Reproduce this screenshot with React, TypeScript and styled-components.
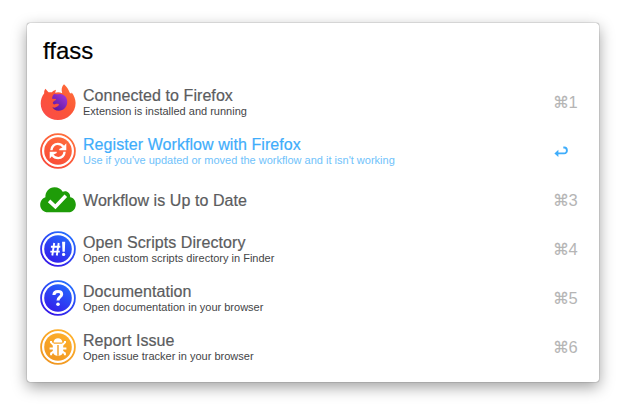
import React from "react";
import styled, { createGlobalStyle } from "styled-components";

const GlobalStyle = createGlobalStyle`
  body { margin: 0; background: #fff; overflow: hidden; }
`;

const Desktop = styled.main`
  box-sizing: border-box;
  width: 626px;
  height: 413px;
  padding: 23px 27px 31px;
  font-family: "Liberation Sans", Arial, sans-serif;
`;

const Panel = styled.section`
  box-sizing: border-box;
  width: 572px;
  height: 359px;
  background: #fff;
  border-radius: 3px;
  box-shadow: 0 0 1px rgba(0, 0, 0, 0.6), 0 0 1px rgba(0, 0, 0, 0.25), 0 5px 15px rgba(0, 0, 0, 0.38);
`;

const Query = styled.div`
  height: 55px;
  line-height: 55px;
  padding-left: 16px;
  font-size: 24px;
  color: #000;
  -webkit-text-stroke: 0.2px #000;
`;

const Results = styled.ul`
  list-style: none;
  margin: 0;
  padding: 0;
`;

const Row = styled.li`
  display: flex;
  align-items: center;
  height: 49px;
  padding-left: 13px;
`;

const Icon = styled.svg`
  display: block;
  flex: none;
  width: 36px;
  height: 36px;
  margin-bottom: 1px;
  overflow: visible;
`;

const Copy = styled.div`
  width: 471px;
  flex: none;
  margin-left: 7px;
  white-space: nowrap;
`;

const Title = styled.div<{ $active?: boolean }>`
  font-size: 16px;
  line-height: 18px;
  letter-spacing: 0.07px;
  color: ${(p) => (p.$active ? "#3fadfb" : "#5b5c5e")};
  -webkit-text-stroke: 0.2px currentColor;
`;

const Subtitle = styled.div<{ $active?: boolean }>`
  font-size: 11px;
  line-height: 13px;
  color: ${(p) => (p.$active ? "#6fc2fb" : "#444547")};
`;

const Shortcut = styled.div`
  display: flex;
  align-items: center;
  height: 20px;
  font-size: 16.5px;
  color: #b5b5b5;
`;

const CommandKey = styled.span`
  font-family: "DejaVu Sans", sans-serif;
  font-size: 16px;
  width: 15.5px;
  margin-left: -1px;
  -webkit-text-stroke: 0.15px currentColor;
`;

const ReturnIcon = styled.svg`
  display: block;
  width: 14px;
  height: 12px;
`;

const Firefox = () => (
  <Icon viewBox="0 0 36 36">
    <defs>
      <linearGradient id="fox" x1="1" y1="0" x2="0" y2="1">
        <stop offset="0" stopColor="#ff7139" />
        <stop offset="0.5" stopColor="#fb5438" />
        <stop offset="1" stopColor="#fb4a4c" />
      </linearGradient>
      <linearGradient id="globe" x1="1" y1="0" x2="0.2" y2="1">
        <stop offset="0" stopColor="#a83bdd" />
        <stop offset="1" stopColor="#5b169f" />
      </linearGradient>
    </defs>
    <path fill="url(#fox)" d="M24 .2C26.8 2.8 28.8 5.5 29.6 8.6L31.1 9.8L31.7 8.6C34 11.5 35.6 15.5 35.6 19C35.6 28.5 27.6 36 18 36C8.4 36 .7 28.7.7 19.5C.7 15.8 2 12 4.2 9.3C4 7.3 4.5 6 5.4 4.8L8.5 8.2L11.8 8.3C12.8 7 14.3 6.1 16 5.7L15.2 8.8C17.5 7.9 20.1 8.2 22.2 9.2C21.1 5.5 21.7 2.5 24 .2Z" />
    <path fill="url(#globe)" d="M14.8 9.7C16.5 10.8 18 9.8 20.2 9.9C24.3 10.2 27 13.3 27.2 17.1C27.6 22.8 23.7 26.8 18.8 26.8C15.5 26.8 13.5 25.1 12.3 23.2C15.7 24.4 17 22.8 18.5 21.6C19.4 20.9 19.1 19.8 17.7 19.8C15.5 19.8 14.7 20.8 13.6 20.3L12.7 18.9C13.2 17.5 14.3 16.7 16 15.9L15.8 15L12.1 14.7C12.2 12.2 13.1 10.5 14.8 9.7Z" />
  </Icon>
);

const Badge = ({ id, from, to, children }: { id: string; from: string; to: string; children: React.ReactNode }) => (
  <Icon viewBox="0 0 36 36">
    <defs>
      <linearGradient id={id} gradientUnits="userSpaceOnUse" x1="28" y1="2" x2="8" y2="34">
        <stop stopColor={from} />
        <stop offset="1" stopColor={to} />
      </linearGradient>
    </defs>
    <circle cx="18" cy="18" r="16.9" fill="none" stroke={`url(#${id})`} strokeWidth="1.8" />
    <circle cx="18" cy="18" r="13.8" fill={`url(#${id})`} />
    {children}
  </Icon>
);

const Sync = () => (
  <Badge id="sync" from="#ff703c" to="#f94838">
    <g fill="none" stroke="#fff" strokeWidth="2.4">
      <path d="M11.4 17.2C11.6 13.6 14.4 10.9 17.8 10.9C20.3 10.9 22.3 12 23.7 14.2" />
      <path d="M24.6 18.8C24.4 22.4 21.6 25.1 18.2 25.1C15.7 25.1 13.7 24 12.3 21.8" />
    </g>
    <path fill="#fff" d="M26.3 10.2V17.2H19.3V16L22.7 14.2ZM9.7 25.8V18.8H16.7V20L13.3 21.8Z" />
  </Badge>
);

const Cloud = () => (
  <Icon viewBox="0 0 36 36">
    <path fill="#1e9c08" d="M8 30.3C3.5 30.3 .2 27 .2 23C.2 19.2 2.5 16.3 5.4 15.3C5.2 9.8 9 5.3 14.5 5.3C18.2 5.3 21 7 22.7 9.8C26.4 8 30.5 10.8 30.2 15.2C33.7 15.8 35.8 18.8 35.8 22.4C35.8 26.8 32.8 30.3 28.5 30.3Z" />
    <path fill="none" stroke="#fff" strokeWidth="3.6" d="M9.1 18.9L15.4 24.7L25.8 13.8" />
  </Icon>
);

const Script = () => (
  <Badge id="script" from="#246fff" to="#3515e8">
    <path fill="none" stroke="#fff" strokeWidth="1.9" d="M14.2 12L12.3 24.5M18.7 12L16.8 24.5M10.9 15.8H20.3M10.3 20.6H19.8" />
    <path fill="#fff" d="M22.1 10.8H25.2L24.8 20.7H22.5Z" />
    <circle cx="23.6" cy="23.4" r="1.6" fill="#fff" />
  </Badge>
);

const Help = () => (
  <Badge id="help" from="#246fff" to="#3515e8">
    <path fill="none" stroke="#fff" strokeWidth="3" d="M13.9 15C14 12.2 15.5 11.5 18 11.5C20.4 11.5 21.7 12.6 21.7 14.3C21.7 17.2 18 16.7 18 20.6" />
    <circle cx="18" cy="24.3" r="1.8" fill="#fff" />
  </Badge>
);

const Bug = () => (
  <Badge id="bug" from="#ffb22d" to="#ef9520">
    <path fill="#fff" d="M13.6 13.4C13.6 7.7 22.4 7.7 22.4 13.4ZM12.8 14.8H23.2V22.2C23.2 28.3 12.8 28.3 12.8 22.2Z" />
    <path fill="none" stroke="#fff" strokeWidth="2" d="M14 16.3L11 13.4V12M22 16.3L25 13.4V12M14 19.5H9.6M22 19.5H26.4M14 22.4L11.1 24.3V26.3M22 22.4L24.9 24.3V26.3" />
    <path stroke="#f39f24" strokeWidth="1.4" d="M18 16V26.8" />
  </Badge>
);

const items = [
  { icon: <Firefox />, title: "Connected to Firefox", subtitle: "Extension is installed and running", hint: "1" },
  { icon: <Sync />, title: "Register Workflow with Firefox", subtitle: "Use if you've updated or moved the workflow and it isn't working", active: true, hint: "" },
  { icon: <Cloud />, title: "Workflow is Up to Date", hint: "3" },
  { icon: <Script />, title: "Open Scripts Directory", subtitle: "Open custom scripts directory in Finder", hint: "4" },
  { icon: <Help />, title: "Documentation", subtitle: "Open documentation in your browser", hint: "5" },
  { icon: <Bug />, title: "Report Issue", subtitle: "Open issue tracker in your browser", hint: "6" },
];

export default function App() {
  return (
    <>
      <GlobalStyle />
      <Desktop>
        <Panel>
          <Query>ffass</Query>
          <Results>
            {items.map((item) => (
              <Row key={item.title}>
                {item.icon}
                <Copy>
                  <Title $active={item.active}>{item.title}</Title>
                  {item.subtitle && <Subtitle $active={item.active}>{item.subtitle}</Subtitle>}
                </Copy>
                <Shortcut>
                  {item.active ? (
                    <ReturnIcon viewBox="0 0 14 12">
                      <path d="M9.3 1.5H10.2C13.8 1.5 13.8 7.4 10.2 7.4H3" fill="none" stroke="#3fadfb" strokeWidth="1.9" />
                      <path d="M.4 7.4L4.4 3.8V11Z" fill="#3fadfb" />
                    </ReturnIcon>
                  ) : (
                    <>
                      <CommandKey>⌘</CommandKey>
                      {item.hint}
                    </>
                  )}
                </Shortcut>
              </Row>
            ))}
          </Results>
        </Panel>
      </Desktop>
    </>
  );
}
